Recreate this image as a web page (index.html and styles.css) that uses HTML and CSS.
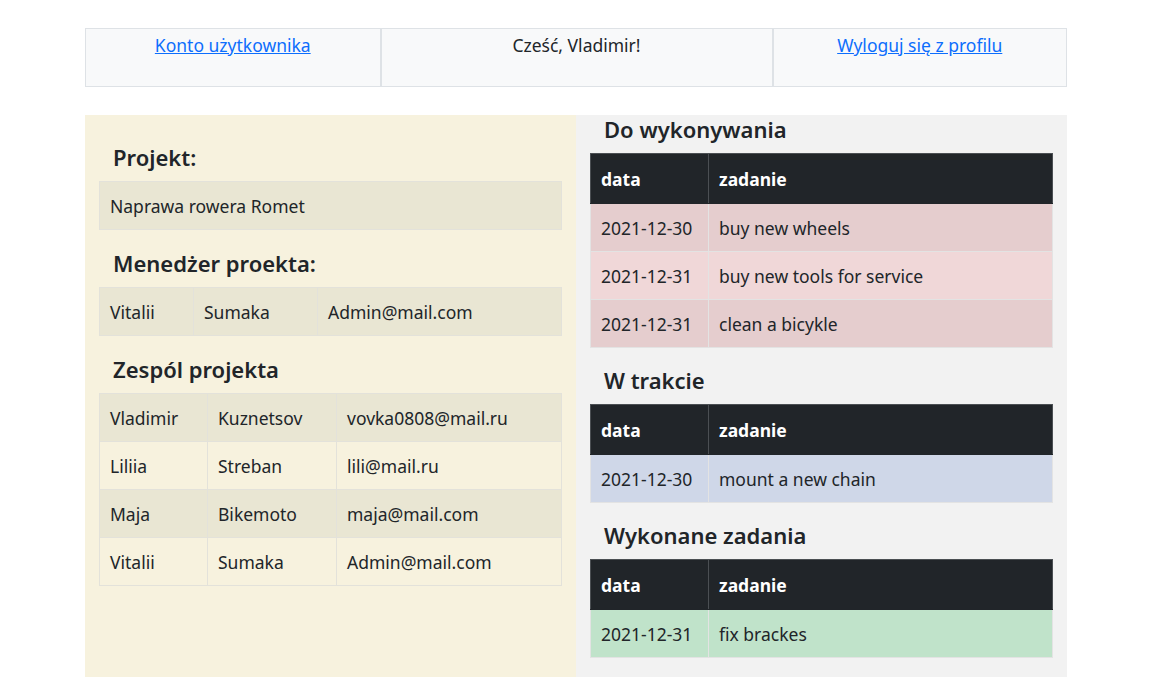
FILE: index.html
```html
<!DOCTYPE html>
<html lang="pl">
<head>
<meta charset="utf-8">
<title>Projekt</title>
<link rel="stylesheet" href="styles.css">
</head>
<body>
<div class="page">
  <table class="topbar">
    <tr>
      <td class="tb-cell tb-1"><a href="#">Konto użytkownika</a></td>
      <td class="tb-cell tb-2">Cześć, Vladimir!</td>
      <td class="tb-cell tb-3"><a href="#">Wyloguj się z profilu</a></td>
    </tr>
  </table>

  <div class="main">
    <div class="col-left">
      <h3 class="heading">Projekt:</h3>
      <table class="tbl light">
        <tr class="odd"><td>Naprawa rowera Romet</td></tr>
      </table>

      <h3 class="heading">Menedżer proekta:</h3>
      <table class="tbl light">
        <tr class="odd"><td class="m1">Vitalii</td><td class="m2">Sumaka</td><td>Admin@mail.com</td></tr>
      </table>

      <h3 class="heading">Zespól projekta</h3>
      <table class="tbl light">
        <tr class="odd"><td class="z1">Vladimir</td><td class="z2">Kuznetsov</td><td>vovka0808@mail.ru</td></tr>
        <tr><td>Liliia</td><td>Streban</td><td>lili@mail.ru</td></tr>
        <tr class="odd"><td>Maja</td><td>Bikemoto</td><td>maja@mail.com</td></tr>
        <tr><td>Vitalii</td><td>Sumaka</td><td>Admin@mail.com</td></tr>
      </table>
    </div>

    <div class="col-right">
      <h3 class="heading">Do wykonywania</h3>
      <table class="tbl task danger">
        <thead><tr><th class="c-date">data</th><th>zadanie</th></tr></thead>
        <tbody>
          <tr class="odd"><td>2021-12-30</td><td>buy new wheels</td></tr>
          <tr><td>2021-12-31</td><td>buy new tools for service</td></tr>
          <tr class="odd"><td>2021-12-31</td><td>clean a bicykle</td></tr>
        </tbody>
      </table>

      <h3 class="heading">W trakcie</h3>
      <table class="tbl task primary">
        <thead><tr><th class="c-date">data</th><th>zadanie</th></tr></thead>
        <tbody>
          <tr class="odd"><td>2021-12-30</td><td>mount a new chain</td></tr>
        </tbody>
      </table>

      <h3 class="heading">Wykonane zadania</h3>
      <table class="tbl task success">
        <thead><tr><th class="c-date">data</th><th>zadanie</th></tr></thead>
        <tbody>
          <tr class="odd"><td>2021-12-31</td><td>fix brackes</td></tr>
        </tbody>
      </table>
    </div>
  </div>
</div>
</body>
</html>
```

FILE: styles.css
```css
* { box-sizing: border-box; }
html, body { margin: 0; padding: 0; background: #ffffff; }
body {
  font-family: "Noto Sans", "Open Sans", sans-serif;
  font-size: 17.5px;
  line-height: 24px;
  color: #212529;
}
.page {
  width: 982px;
  padding-top: 28px;
  margin-left: 85px;
}
.topbar {
  width: 100%;
  border-collapse: collapse;
  background: #f8f9fa;
  border: 1px solid #dee2e6;
  table-layout: fixed;
}
.tb-cell {
  border: 1px solid #dee2e6;
  border-width: 0 2px;
  height: 58px;
  vertical-align: top;
  text-align: center;
  padding: 4px 8px 8px;
}
.tb-1 { width: 295px; border-left: 0; }
.tb-2 { width: 392px; }
.tb-3 { border-right: 0; }
.topbar a { color: #0d6efd; text-decoration: underline; }

.main {
  margin-top: 28px;
  display: flex;
  align-items: stretch;
}
.col-left {
  width: 491px;
  background: #f7f2de;
  padding: 28px 14px 20px;
}
.col-right {
  flex: 1;
  background: #f2f2f2;
  padding: 0 14px 1px;
}
.heading {
  margin: 0 0 9px;
  padding-left: 14px;
  font-size: 22px;
  line-height: 29px;
  font-weight: 600;
}
.tbl {
  width: 100%;
  border-collapse: collapse;
  margin-bottom: 19px;
  table-layout: fixed;
}
.col-right .tbl { margin-bottom: 18px; }
.tbl td, .tbl th {
  padding: 0 10px;
  height: 48px;
  text-align: left;
  vertical-align: middle;
  white-space: nowrap;
}
.light td { border: 1px solid #e3e2da; }
.light tr td { background: #f7f2de; }
.light tr.odd td { background: #e9e6d3; }
.m1 { width: 94px; }
.m2 { width: 124px; }
.z1 { width: 108px; }
.z2 { width: 129px; }

.task th {
  background: #212529;
  color: #ffffff;
  font-weight: 700;
  height: 50px;
  border: 1px solid #4b4f53;
  border-bottom-color: #212529;
}
.task td { border: 1px solid #e3e3e3; }
.c-date { width: 118px; }
.danger tr td { background: #f0d7d8; }
.danger tr.odd td { background: #e5cdce; }
.primary tr td { background: #cfd7e8; }
.success tr td { background: #c0e3ca; }
```
